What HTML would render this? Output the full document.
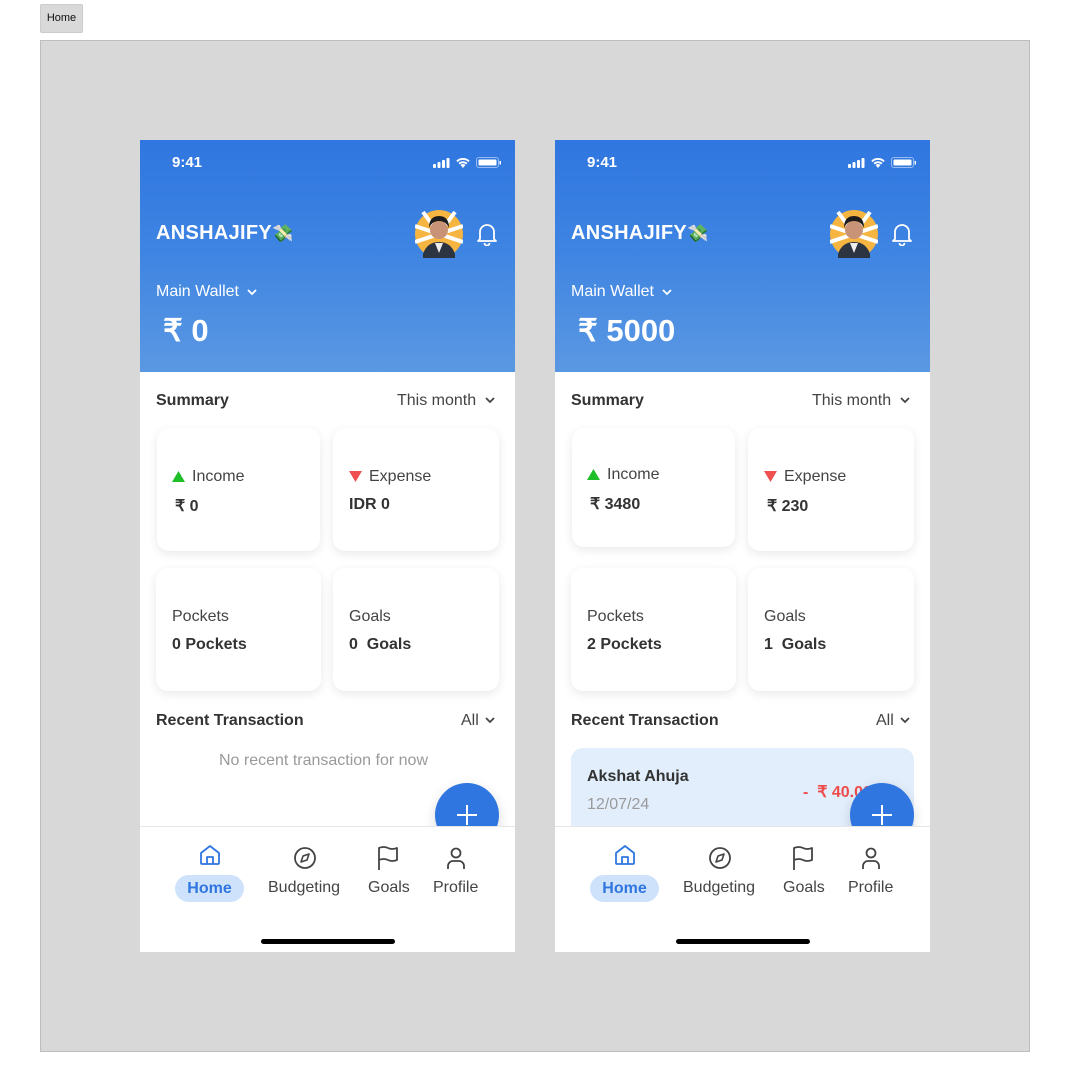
<!DOCTYPE html>
<html><head><meta charset="utf-8"><style>
*{margin:0;padding:0;box-sizing:border-box}
body{width:1070px;height:1092px;background:#fff;font-family:"Liberation Sans",sans-serif;position:relative;overflow:hidden;color:#333}
.tab{position:absolute;left:40px;top:4px;width:43px;height:29px;background:#d9d9d9;border:1px solid #ccc;border-radius:2px;font-size:11px;line-height:27px;text-align:center;color:#111}
.canvas{position:absolute;left:40px;top:40px;width:990px;height:1012px;background:#d8d8d8;border:1px solid #bdbdbd}
.ph{position:absolute;top:140px;width:375px;height:812px;background:#fff;overflow:hidden}
.ph *{position:absolute}
.hdr{left:0;top:0;width:375px;height:232px;background:linear-gradient(180deg,#2f76e0 0%,#3f85e2 50%,#5b98e3 100%)}
.t{white-space:nowrap}
.card{background:#fff;border-radius:12px;box-shadow:0 3px 10px rgba(0,0,0,.09)}
.lbl{font-size:16px;color:#444}
.val{font-size:16px;font-weight:bold;color:#333}
</style></head><body>
<div class="tab">Home</div>
<div class="canvas"></div>

<!-- PHONE 1 -->
<div class="ph" style="left:140px">
 <div class="hdr"></div>
 <div class="t" style="left:32px;top:14px;color:#fff;font-weight:bold;font-size:15px">9:41</div>
 <svg style="left:293px;top:17px" width="70" height="12" viewBox="0 0 70 12"><g fill="#fff"><rect x="0" y="7" width="3" height="4" rx="1"/><rect x="4.5" y="5" width="3" height="6" rx="1"/><rect x="9" y="3" width="3" height="8" rx="1"/><rect x="13.5" y="1" width="3" height="10" rx="1"/><path d="M30 11l-2.5-3a4 4 0 015 0z M25.5 6a6.5 6.5 0 019 0l-1.3 1.4a4.7 4.7 0 00-6.4 0z M23.3 3.7a9.6 9.6 0 0113.4 0l-1.3 1.4a7.8 7.8 0 00-10.8 0z"/><rect x="43.5" y="0.5" width="22" height="10" rx="2.5" fill="none" stroke="#fff" stroke-opacity=".5"/><rect x="45.5" y="2.5" width="18" height="6" rx="1"/><rect x="66.5" y="4" width="1.5" height="3.5"/></g></svg>
 <div class="t" style="left:16px;top:82px;color:#fff;font-weight:bold;font-size:20px;letter-spacing:.3px">ANSHAJIFY<span style="position:static;font-size:17px">💸</span></div>
 <svg style="left:275px;top:70px" width="48" height="48" viewBox="0 0 48 48"><circle cx="24" cy="24" r="24" fill="#f6b440"/><g stroke="#fff" stroke-width="4"><path d="M24 24L0 16M24 24L0 32M24 24L48 16M24 24L48 32M24 24L8 2M24 24L40 2"/></g><circle cx="24" cy="20" r="9" fill="#c99378"/><path d="M14 18q0-12 10-12t10 12q-3-7-10-7t-10 7z" fill="#1c1c1c"/><path d="M8 44q4-12 16-12t16 12v4H8z" fill="#2b3440"/><path d="M20 33h8l-4 10z" fill="#eee"/></svg>
 <svg style="left:336px;top:82px" width="22" height="24" viewBox="0 0 22 24"><path d="M4 17V10a7 7 0 0114 0v7l2 2H2z M8.5 21a2.5 2.5 0 005 0" fill="none" stroke="#fff" stroke-width="1.8" stroke-linejoin="round"/></svg>
 <div class="t" style="left:16px;top:143px;color:#fff;font-size:16px">Main Wallet</div>
 <svg style="left:106px;top:147px" width="12" height="10" viewBox="0 0 12 10"><path d="M2 3l4 4 4-4" stroke="#fff" stroke-width="1.8" fill="none"/></svg>
 <div class="t" style="left:23px;top:173px;color:#fff;font-weight:bold;font-size:31px">₹ 0</div>

 <div class="t" style="left:16px;top:252px;font-weight:bold;font-size:16px;color:#333">Summary</div>
 <div class="t" style="left:257px;top:252px;font-size:16px;color:#444">This month</div>
 <svg style="left:344px;top:255px" width="12" height="10" viewBox="0 0 12 10"><path d="M2 3l4 4 4-4" stroke="#444" stroke-width="1.8" fill="none"/></svg>

 <div class="card" style="left:17px;top:288px;width:163px;height:123px"></div>
 <div class="card" style="left:193px;top:288px;width:166px;height:123px"></div>
 <div class="card" style="left:16px;top:428px;width:165px;height:123px"></div>
 <div class="card" style="left:193px;top:428px;width:166px;height:123px"></div>
 <svg style="left:32px;top:331px" width="13" height="11"><path d="M6.5 0L13 11H0z" fill="#1fbf2a"/></svg>
 <div class="t lbl" style="left:52px;top:328px">Income</div>
 <div class="t val" style="left:35px;top:356px">₹ 0</div>
 <svg style="left:209px;top:331px" width="13" height="11"><path d="M0 0h13L6.5 11z" fill="#f05050"/></svg>
 <div class="t lbl" style="left:229px;top:328px">Expense</div>
 <div class="t val" style="left:209px;top:356px">IDR 0</div>
 <div class="t lbl" style="left:32px;top:468px">Pockets</div>
 <div class="t val" style="left:32px;top:496px">0 Pockets</div>
 <div class="t lbl" style="left:209px;top:468px">Goals</div>
 <div class="t val" style="left:209px;top:496px">0&nbsp; Goals</div>

 <div class="t" style="left:16px;top:572px;font-weight:bold;font-size:16px;color:#333">Recent Transaction</div>
 <div class="t" style="left:321px;top:572px;font-size:16px;color:#444">All</div>
 <svg style="left:344px;top:575px" width="12" height="10" viewBox="0 0 12 10"><path d="M2 3l4 4 4-4" stroke="#444" stroke-width="1.8" fill="none"/></svg>
 <div class="t" style="left:79px;top:612px;font-size:16px;color:#9a9a9a">No recent transaction for now</div>

 <div style="left:295px;top:643px;width:64px;height:64px;border-radius:50%;background:#2f76e0;box-shadow:0 4px 12px rgba(0,0,0,.15)"></div>
 <svg style="left:316px;top:664px" width="22" height="22"><path d="M11 1v20M1 11h20" stroke="#fff" stroke-width="2"/></svg>

 <div style="left:0;top:686px;width:375px;height:126px;background:#fff;border-top:1px solid #e6e6e6"></div>
 <svg style="left:58px;top:703px" width="24" height="24" viewBox="0 0 24 24"><path d="M3 10L12 3l9 7v10a1 1 0 01-1 1H4a1 1 0 01-1-1z M9 21v-7h6v7" fill="none" stroke="#2f76e0" stroke-width="1.8" stroke-linejoin="round"/></svg>
 <div style="left:35px;top:735px;width:69px;height:27px;border-radius:14px;background:#cfe2fb"></div>
 <div class="t" style="left:35px;top:740px;width:69px;text-align:center;font-weight:bold;font-size:16px;color:#2f76e0">Home</div>
 <svg style="left:153px;top:706px" width="24" height="24" viewBox="0 0 24 24"><circle cx="12" cy="12" r="10" fill="none" stroke="#444" stroke-width="1.8"/><path d="M16 8l-2 6-6 2 2-6z" fill="none" stroke="#444" stroke-width="1.6" stroke-linejoin="round"/></svg>
 <div class="t" style="left:128px;top:739px;font-size:16px;color:#444">Budgeting</div>
 <svg style="left:236px;top:705px" width="24" height="26" viewBox="0 0 24 26"><path d="M3 25V3q5-2 9 0t9 0v12q-5 2-9 0t-9 0" fill="none" stroke="#444" stroke-width="1.8" stroke-linejoin="round"/></svg>
 <div class="t" style="left:228px;top:739px;font-size:16px;color:#444">Goals</div>
 <svg style="left:304px;top:706px" width="24" height="24" viewBox="0 0 24 24"><circle cx="12" cy="7" r="4.5" fill="none" stroke="#444" stroke-width="1.8"/><path d="M4 23v-3a5 5 0 015-5h6a5 5 0 015 5v3" fill="none" stroke="#444" stroke-width="1.8"/></svg>
 <div class="t" style="left:293px;top:739px;font-size:16px;color:#444">Profile</div>
 <div style="left:121px;top:799px;width:134px;height:5px;border-radius:3px;background:#000"></div>
</div>

<!-- PHONE 2 -->
<div class="ph" style="left:555px">
 <div class="hdr"></div>
 <div class="t" style="left:32px;top:14px;color:#fff;font-weight:bold;font-size:15px">9:41</div>
 <svg style="left:293px;top:17px" width="70" height="12" viewBox="0 0 70 12"><g fill="#fff"><rect x="0" y="7" width="3" height="4" rx="1"/><rect x="4.5" y="5" width="3" height="6" rx="1"/><rect x="9" y="3" width="3" height="8" rx="1"/><rect x="13.5" y="1" width="3" height="10" rx="1"/><path d="M30 11l-2.5-3a4 4 0 015 0z M25.5 6a6.5 6.5 0 019 0l-1.3 1.4a4.7 4.7 0 00-6.4 0z M23.3 3.7a9.6 9.6 0 0113.4 0l-1.3 1.4a7.8 7.8 0 00-10.8 0z"/><rect x="43.5" y="0.5" width="22" height="10" rx="2.5" fill="none" stroke="#fff" stroke-opacity=".5"/><rect x="45.5" y="2.5" width="18" height="6" rx="1"/><rect x="66.5" y="4" width="1.5" height="3.5"/></g></svg>
 <div class="t" style="left:16px;top:82px;color:#fff;font-weight:bold;font-size:20px;letter-spacing:.3px">ANSHAJIFY<span style="position:static;font-size:17px">💸</span></div>
 <svg style="left:275px;top:70px" width="48" height="48" viewBox="0 0 48 48"><circle cx="24" cy="24" r="24" fill="#f6b440"/><g stroke="#fff" stroke-width="4"><path d="M24 24L0 16M24 24L0 32M24 24L48 16M24 24L48 32M24 24L8 2M24 24L40 2"/></g><circle cx="24" cy="20" r="9" fill="#c99378"/><path d="M14 18q0-12 10-12t10 12q-3-7-10-7t-10 7z" fill="#1c1c1c"/><path d="M8 44q4-12 16-12t16 12v4H8z" fill="#2b3440"/><path d="M20 33h8l-4 10z" fill="#eee"/></svg>
 <svg style="left:336px;top:82px" width="22" height="24" viewBox="0 0 22 24"><path d="M4 17V10a7 7 0 0114 0v7l2 2H2z M8.5 21a2.5 2.5 0 005 0" fill="none" stroke="#fff" stroke-width="1.8" stroke-linejoin="round"/></svg>
 <div class="t" style="left:16px;top:143px;color:#fff;font-size:16px">Main Wallet</div>
 <svg style="left:106px;top:147px" width="12" height="10" viewBox="0 0 12 10"><path d="M2 3l4 4 4-4" stroke="#fff" stroke-width="1.8" fill="none"/></svg>
 <div class="t" style="left:23px;top:173px;color:#fff;font-weight:bold;font-size:31px">₹ 5000</div>

 <div class="t" style="left:16px;top:252px;font-weight:bold;font-size:16px;color:#333">Summary</div>
 <div class="t" style="left:257px;top:252px;font-size:16px;color:#444">This month</div>
 <svg style="left:344px;top:255px" width="12" height="10" viewBox="0 0 12 10"><path d="M2 3l4 4 4-4" stroke="#444" stroke-width="1.8" fill="none"/></svg>

 <div class="card" style="left:17px;top:288px;width:163px;height:119px"></div>
 <div class="card" style="left:193px;top:288px;width:166px;height:123px"></div>
 <div class="card" style="left:16px;top:428px;width:165px;height:123px"></div>
 <div class="card" style="left:193px;top:428px;width:166px;height:123px"></div>
 <svg style="left:32px;top:329px" width="13" height="11"><path d="M6.5 0L13 11H0z" fill="#1fbf2a"/></svg>
 <div class="t lbl" style="left:52px;top:326px">Income</div>
 <div class="t val" style="left:35px;top:354px">₹ 3480</div>
 <svg style="left:209px;top:331px" width="13" height="11"><path d="M0 0h13L6.5 11z" fill="#f05050"/></svg>
 <div class="t lbl" style="left:229px;top:328px">Expense</div>
 <div class="t val" style="left:212px;top:356px">₹ 230</div>
 <div class="t lbl" style="left:32px;top:468px">Pockets</div>
 <div class="t val" style="left:32px;top:496px">2 Pockets</div>
 <div class="t lbl" style="left:209px;top:468px">Goals</div>
 <div class="t val" style="left:209px;top:496px">1&nbsp; Goals</div>

 <div class="t" style="left:16px;top:572px;font-weight:bold;font-size:16px;color:#333">Recent Transaction</div>
 <div class="t" style="left:321px;top:572px;font-size:16px;color:#444">All</div>
 <svg style="left:344px;top:575px" width="12" height="10" viewBox="0 0 12 10"><path d="M2 3l4 4 4-4" stroke="#444" stroke-width="1.8" fill="none"/></svg>

 <div style="left:16px;top:608px;width:343px;height:100px;border-radius:12px;background:#e2eefc"></div>
 <div class="t" style="left:32px;top:628px;font-weight:bold;font-size:16px;color:#333">Akshat Ahuja</div>
 <div class="t" style="left:32px;top:656px;font-size:16px;color:#9a9a9a">12/07/24</div>
 <div class="t" style="left:248px;top:642px;font-weight:bold;font-size:16px;color:#f04b4b">-&nbsp; ₹ 40.00</div>

 <div style="left:295px;top:643px;width:64px;height:64px;border-radius:50%;background:#2f76e0;box-shadow:0 4px 12px rgba(0,0,0,.15)"></div>
 <svg style="left:316px;top:664px" width="22" height="22"><path d="M11 1v20M1 11h20" stroke="#fff" stroke-width="2"/></svg>

 <div style="left:0;top:686px;width:375px;height:126px;background:#fff;border-top:1px solid #e6e6e6"></div>
 <svg style="left:58px;top:703px" width="24" height="24" viewBox="0 0 24 24"><path d="M3 10L12 3l9 7v10a1 1 0 01-1 1H4a1 1 0 01-1-1z M9 21v-7h6v7" fill="none" stroke="#2f76e0" stroke-width="1.8" stroke-linejoin="round"/></svg>
 <div style="left:35px;top:735px;width:69px;height:27px;border-radius:14px;background:#cfe2fb"></div>
 <div class="t" style="left:35px;top:740px;width:69px;text-align:center;font-weight:bold;font-size:16px;color:#2f76e0">Home</div>
 <svg style="left:153px;top:706px" width="24" height="24" viewBox="0 0 24 24"><circle cx="12" cy="12" r="10" fill="none" stroke="#444" stroke-width="1.8"/><path d="M16 8l-2 6-6 2 2-6z" fill="none" stroke="#444" stroke-width="1.6" stroke-linejoin="round"/></svg>
 <div class="t" style="left:128px;top:739px;font-size:16px;color:#444">Budgeting</div>
 <svg style="left:236px;top:705px" width="24" height="26" viewBox="0 0 24 26"><path d="M3 25V3q5-2 9 0t9 0v12q-5 2-9 0t-9 0" fill="none" stroke="#444" stroke-width="1.8" stroke-linejoin="round"/></svg>
 <div class="t" style="left:228px;top:739px;font-size:16px;color:#444">Goals</div>
 <svg style="left:304px;top:706px" width="24" height="24" viewBox="0 0 24 24"><circle cx="12" cy="7" r="4.5" fill="none" stroke="#444" stroke-width="1.8"/><path d="M4 23v-3a5 5 0 015-5h6a5 5 0 015 5v3" fill="none" stroke="#444" stroke-width="1.8"/></svg>
 <div class="t" style="left:293px;top:739px;font-size:16px;color:#444">Profile</div>
 <div style="left:121px;top:799px;width:134px;height:5px;border-radius:3px;background:#000"></div>
</div>
</body></html>
